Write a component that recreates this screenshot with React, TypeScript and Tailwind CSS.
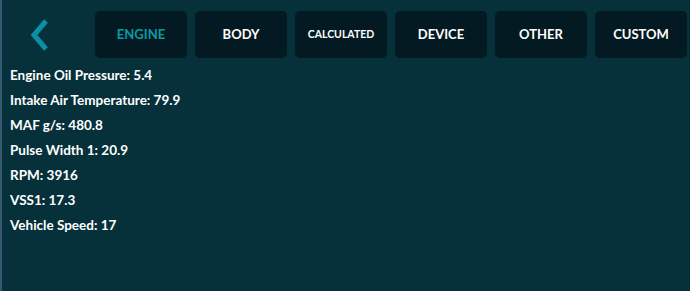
import React from 'react';

const tabs = [
  { label: 'ENGINE', active: true },
  { label: 'BODY' },
  { label: 'CALCULATED', small: true },
  { label: 'DEVICE' },
  { label: 'OTHER' },
  { label: 'CUSTOM' },
];

const readings = [
  'Engine Oil Pressure: 5.4',
  'Intake Air Temperature: 79.9',
  'MAF g/s: 480.8',
  'Pulse Width 1: 20.9',
  'RPM: 3916',
  'VSS1: 17.3',
  'Vehicle Speed: 17',
];

export default function App() {
  return (
    <div
      className="w-[690px] h-[291px] bg-[#06313a] border-l-2 border-[#355a72] overflow-hidden"
      style={{ fontFamily: 'Lato, "Noto Sans", sans-serif' }}
    >
      <div className="flex items-center pt-[11px]">
        <div className="w-[93px] h-[47px] flex items-center">
          <svg width="22" height="34" viewBox="0 0 22 34" className="ml-[27px]">
            <path d="M17 3 L5 17 L17 31" fill="none" stroke="#0b8fa6" strokeWidth="5" strokeLinecap="butt" strokeLinejoin="miter" />
          </svg>
        </div>
        <div className="flex gap-2">
          {tabs.map((t) => (
            <button
              key={t.label}
              className={
                'w-[92px] h-[47px] rounded-[5px] bg-[#041a22] font-bold flex items-center justify-center ' +
                (t.active ? 'text-[#0e9aa5] ' : 'text-white ') +
                (t.small ? 'text-[10.5px]' : 'text-[13px]')
              }
            >
              {t.label}
            </button>
          ))}
        </div>
      </div>
      <div className="pl-[8px] mt-[5px] text-white font-bold text-[13.5px] leading-[25px]">
        {readings.map((r) => (
          <div key={r}>{r}</div>
        ))}
      </div>
    </div>
  );
}
